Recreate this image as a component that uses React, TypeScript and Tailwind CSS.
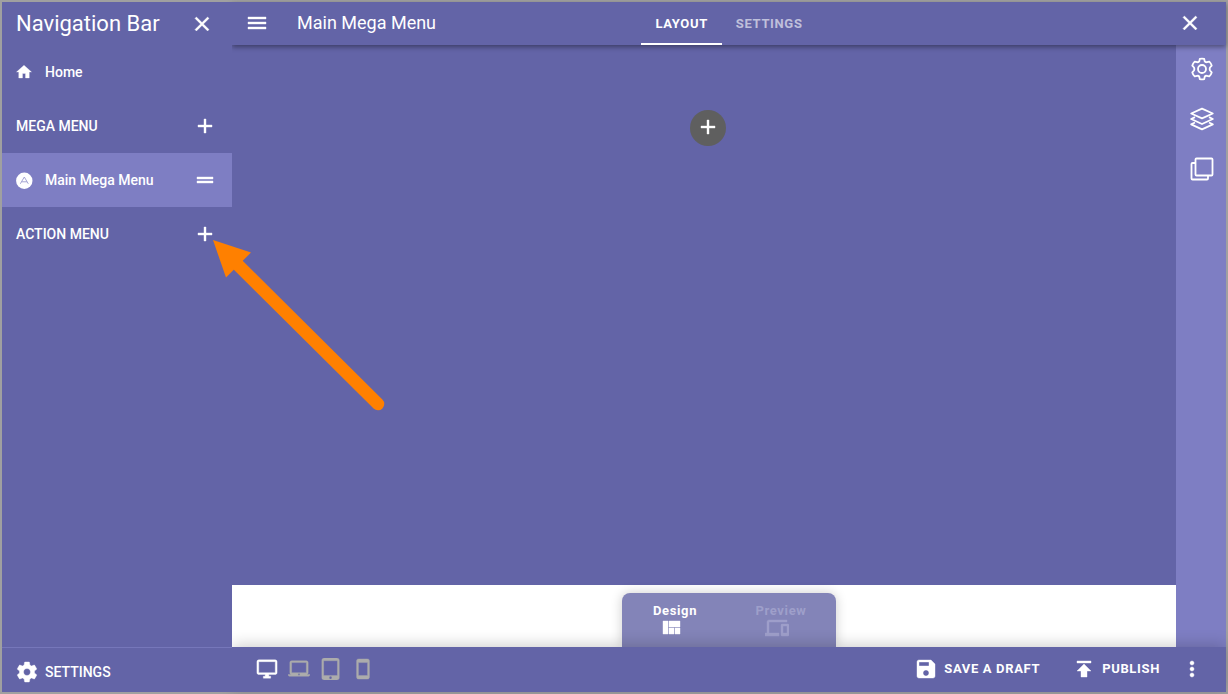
import React from "react";

const paths = {
  close: "M19 6.41L17.59 5 12 10.59 6.41 5 5 6.41 10.59 12 5 17.59 6.41 19 12 13.41 17.59 19 19 17.59 13.41 12z",
  menu: "M3 18h18v-2H3v2zm0-5h18v-2H3v2zm0-7v2h18V6H3z",
  home: "M10 20v-6h4v6h5v-8h3L12 3 2 12h3v8z",
  add: "M19 13h-6v6h-2v-6H5v-2h6V5h2v6h6v2z",
  drag: "M20 9H4v2h16V9zM4 15h16v-2H4v2z",
  cog: "M19.43 12.98c.04-.32.07-.64.07-.98s-.03-.66-.07-.98l2.11-1.65c.19-.15.24-.42.12-.64l-2-3.46c-.12-.22-.39-.3-.61-.22l-2.49 1c-.52-.4-1.08-.73-1.69-.98l-.38-2.65C14.46 2.18 14.25 2 14 2h-4c-.25 0-.46.18-.49.42l-.38 2.65c-.61.25-1.17.59-1.69.98l-2.49-1c-.23-.09-.49 0-.61.22l-2 3.46c-.13.22-.07.49.12.64l2.11 1.65c-.04.32-.07.65-.07.98s.03.66.07.98l-2.11 1.65c-.19.15-.24.42-.12.64l2 3.46c.12.22.39.3.61.22l2.49-1c.52.4 1.08.73 1.69.98l.38 2.65c.03.24.24.42.49.42h4c.25 0 .46-.18.49-.42l.38-2.65c.61-.25 1.17-.59 1.69-.98l2.49 1c.23.09.49 0 .61-.22l2-3.46c.12-.22.07-.49-.12-.64l-2.11-1.65zM12 15.5c-1.93 0-3.5-1.57-3.5-3.5s1.57-3.5 3.5-3.5 3.5 1.57 3.5 3.5-1.57 3.5-3.5 3.5z",
  desktop: "M21 2H3c-1.1 0-2 .9-2 2v12c0 1.1.9 2 2 2h7v2H8v2h8v-2h-2v-2h7c1.1 0 2-.9 2-2V4c0-1.1-.9-2-2-2zm0 14H3V4h18v12z",
  laptop: "M20 18c1.1 0 1.99-.9 1.99-2L22 5c0-1.1-.9-2-2-2H4c-1.1 0-2 .9-2 2v11c0 1.1.9 2 2 2H0c0 1.1.9 2 2 2h20c1.1 0 2-.9 2-2h-4zM4 5h16v11H4V5zm8 14c-.55 0-1-.45-1-1s.45-1 1-1 1 .45 1 1-.45 1-1 1z",
  tablet: "M18.5 0h-14C3.12 0 2 1.12 2 2.5v19C2 22.88 3.12 24 4.5 24h14c1.38 0 2.5-1.12 2.5-2.5v-19C21 1.12 19.88 0 18.5 0zm-7 23c-.83 0-1.5-.67-1.5-1.5s.67-1.5 1.5-1.5 1.5.67 1.5 1.5-.67 1.5-1.5 1.5zm7.5-4H4V3h15v16z",
  phone: "M17 1.01L7 1c-1.1 0-1.99.9-1.99 2v18c0 1.1.89 2 1.99 2h10c1.1 0 2-.9 2-2V3c0-1.1-.9-1.99-2-1.99zM17 19H7V5h10v14z",
  save: "M17 3H5c-1.11 0-2 .9-2 2v14c0 1.1.89 2 2 2h14c1.1 0 2-.9 2-2V7l-4-4zm-5 16c-1.66 0-3-1.34-3-3s1.34-3 3-3 3 1.34 3 3-1.34 3-3 3zm3-10H5V5h10v4z",
  publish: "M5 4v2h14V4H5zm0 10h4v6h6v-6h4l-7-7-7 7z",
  more: "M12 8c1.1 0 2-.9 2-2s-.9-2-2-2-2 .9-2 2 .9 2 2 2zm0 2c-1.1 0-2 .9-2 2s.9 2 2 2 2-.9 2-2-.9-2-2-2zm0 6c-1.1 0-2 .9-2 2s.9 2 2 2 2-.9 2-2-.9-2-2-2z",
  quilt: "M10 18h5v-6h-5v6zm-6 0h5V5H4v13zm12 0h5v-6h-5v6zM10 5v6h11V5H10z",
  devices: "M4 6h18V4H4c-1.1 0-2 .9-2 2v11H0v3h14v-3H4V6zm19 2h-6c-.55 0-1 .45-1 1v10c0 .55.45 1 1 1h6c.55 0 1-.45 1-1V9c0-.55-.45-1-1-1zm-1 9h-4v-7h4v7z",
};

function Icon({ name, className = "size-6" }: { name: keyof typeof paths; className?: string }) {
  return (
    <svg
      viewBox="0 0 24 24"
      fill="currentColor"
      stroke="currentColor"
      strokeWidth="0.4"
      aria-hidden="true"
      className={`shrink-0 ${className}`}
    >
      <path d={paths[name]} />
    </svg>
  );
}

function Section({ title }: { title: string }) {
  return (
    <div className="flex h-[54px] items-center justify-between pr-[15px] pl-[14px]">
      <h2 className="text-sm font-medium">{title}</h2>
      <button aria-label={`Add to ${title}`}>
        <Icon name="add" />
      </button>
    </div>
  );
}

function Sidebar() {
  return (
    <aside className="relative z-20 flex w-[230px] shrink-0 flex-col bg-[#6364a7]">
      <div className="flex h-[43px] items-center justify-between pr-[18px] pl-[14px]">
        <h1 className="text-[22px] leading-7">Navigation Bar</h1>
        <button aria-label="Close navigation bar">
          <Icon name="close" />
        </button>
      </div>
      <a href="#home" className="flex h-[54px] items-center gap-3 pl-[13px] text-sm font-medium">
        <Icon name="home" className="size-[18px]" />
        Home
      </a>
      <Section title="MEGA MENU" />
      <div className="flex h-[54px] items-center justify-between bg-[#7e7ec3] pr-[15px] pl-[13px]">
        <a href="#main-mega-menu" className="flex items-center gap-3 text-sm font-medium">
          <svg viewBox="0 0 18 18" aria-hidden="true" className="size-[18px]">
            <circle cx="9.3" cy="9.8" r="8.2" fill="#fff" />
            <path d="M5.3 12.8L9.3 6L13.3 12.8M6.6 10.8H12" fill="none" stroke="#9c9ccf" strokeWidth="0.9" />
          </svg>
          Main Mega Menu
        </a>
        <button aria-label="Reorder Main Mega Menu">
          <Icon name="drag" />
        </button>
      </div>
      <Section title="ACTION MENU" />
      <div className="mt-auto h-[45px] border-t border-[#7677ba] pt-1 pl-[13px]">
        <button className="flex h-10 items-center gap-[6px] text-sm font-medium">
          <Icon name="cog" />
          SETTINGS
        </button>
      </div>
    </aside>
  );
}

function Header() {
  return (
    <header className="relative z-10 grid h-[43px] shrink-0 grid-cols-[1fr_auto_1fr] bg-[#6364a7] shadow-[0_2px_5px_rgba(0,0,0,0.4)]">
      <div className="flex items-center gap-7 pb-[2px] pl-[13px]">
        <button aria-label="Menu">
          <Icon name="menu" />
        </button>
        <span className="text-lg">Main Mega Menu</span>
      </div>
      <nav className="flex text-[13px] font-bold tracking-wider">
        <button className="border-b-2 border-white px-[14px] pt-[2px]">LAYOUT</button>
        <button className="border-b-2 border-transparent px-[14px] pt-[2px] text-white/60">SETTINGS</button>
      </nav>
      <div className="flex items-center justify-end pr-6 pb-[2px]">
        <button aria-label="Close editor">
          <Icon name="close" />
        </button>
      </div>
    </header>
  );
}

function Rail() {
  return (
    <div className="flex w-[50px] shrink-0 flex-col items-center gap-[26px] bg-[#7e7ec3] pt-3 pl-[2px]">
      <button aria-label="Settings">
        <svg viewBox="0 0 24 24" fill="none" stroke="currentColor" strokeWidth="1.8" strokeLinejoin="round" className="size-6">
          <circle cx="12" cy="12" r="4" />
          <path d="M9.8 1.9Q12 1.3 14.2 1.9L14.7 4.3Q15.3 5.4 16.9 5.2L19.3 4.7Q21 6.200 21.700 8.600L20 10.500Q19.200 12 20 13.500L21.700 15.400Q21 17.800 19.300 19.300L16.900 18.800Q15.300 18.600 14.700 19.700L14.200 22.100Q12 22.700 9.800 22.100L9.300 19.700Q8.700 18.600 7.100 18.800L4.700 19.300Q3 17.800 2.300 15.400L4 13.500Q4.800 12 4 10.500L2.300 8.600Q3 6.200 4.700 4.700L7.100 5.200Q8.700 5.400 9.300 4.300Z" />
        </svg>
      </button>
      <button aria-label="Layers">
        <svg viewBox="0 0 24 24" fill="none" stroke="currentColor" strokeWidth="1.8" strokeLinejoin="round" className="size-6">
          <path d="M12 1.6l10.8 4.9L12 11.4 1.2 6.5z" />
          <path d="M5 10.1L1.2 12 12 17l10.800-5L19 10.100" />
          <path d="M5 15.500L1.200 17.400 12 22.400l10.800-5L19 15.500" />
        </svg>
      </button>
      <button aria-label="Duplicate">
        <svg viewBox="0 0 24 24" fill="none" stroke="currentColor" strokeWidth="1.8" strokeLinejoin="round" className="size-6">
          <rect x="5.5" y="1.5" width="17" height="17" rx="1" />
          <path d="M5.5 6H2.500a1 1 0 0 0-1 1v14.500a1 1 0 0 0 1 1H17a1 1 0 0 0 1-1v-3" />
        </svg>
      </button>
    </div>
  );
}

function Footer() {
  return (
    <footer className="relative z-10 flex h-[45px] shrink-0 items-center justify-between bg-[#6364a7] pr-[22px] pb-[2px] pl-6 shadow-[0_-2px_16px_rgba(0,0,0,0.2)]">
      <div className="flex gap-[10px] text-[#acacac]">
        <button aria-label="Desktop" className="text-white">
          <Icon name="desktop" className="size-[22px]" />
        </button>
        <button aria-label="Laptop">
          <Icon name="laptop" className="size-[22px]" />
        </button>
        <button aria-label="Tablet">
          <Icon name="tablet" className="size-[22px]" />
        </button>
        <button aria-label="Phone">
          <Icon name="phone" className="size-[22px]" />
        </button>
      </div>
      <div className="flex items-center text-[13px] font-bold tracking-wider">
        <button className="mr-8 flex items-center gap-[6px]">
          <Icon name="save" />
          SAVE A DRAFT
        </button>
        <button className="mr-5 flex items-center gap-[6px]">
          <Icon name="publish" />
          PUBLISH
        </button>
        <button aria-label="More options">
          <Icon name="more" />
        </button>
      </div>
    </footer>
  );
}

export default function App() {
  return (
    <div className="relative flex h-screen min-h-96 border-2 border-[#a0a0a0] bg-[#6364a7] font-[Roboto,sans-serif] text-white">
      <Sidebar />
      <main className="relative flex min-w-0 flex-1 flex-col">
        <Header />
        <div className="flex flex-1">
          <div className="flex flex-1 flex-col">
            <div className="flex flex-1 justify-center pt-[65px] pl-2">
              <button aria-label="Add block" className="flex size-9 items-center justify-center rounded-full bg-[#5f5f5f] pb-[2px]">
                <Icon name="add" />
              </button>
            </div>
            <div className="h-[62px] bg-white" />
          </div>
          <Rail />
        </div>
        <div className="absolute bottom-[45px] left-1/2 grid h-[54px] w-[214px] -translate-x-1/2 grid-cols-2 rounded-t-lg bg-[#8384b8] pr-[2px] text-[13px] font-bold tracking-wider shadow-[0_0_12px_rgba(0,0,0,0.2)]">
          <button className="flex flex-col items-center pt-[9px]">
            <span className="leading-[18px]">Design</span>
            <Icon name="quilt" className="-mt-1 mr-2 size-6" />
          </button>
          <button className="flex flex-col items-center pt-[9px] text-[#9e9fca]">
            <span className="leading-[18px]">Preview</span>
            <Icon name="devices" className="-mt-1 mr-2 size-6" />
          </button>
        </div>
        <Footer />
      </main>
      <svg viewBox="0 0 174 174" aria-hidden="true" className="pointer-events-none absolute top-[237px] left-[210px] z-30 size-[174px]">
        <path d="M1 1L39 13.5L14 38.5z" fill="#ff8000" />
        <path d="M24 24L166 165" stroke="#ff8000" strokeWidth="12.5" strokeLinecap="round" />
      </svg>
    </div>
  );
}
